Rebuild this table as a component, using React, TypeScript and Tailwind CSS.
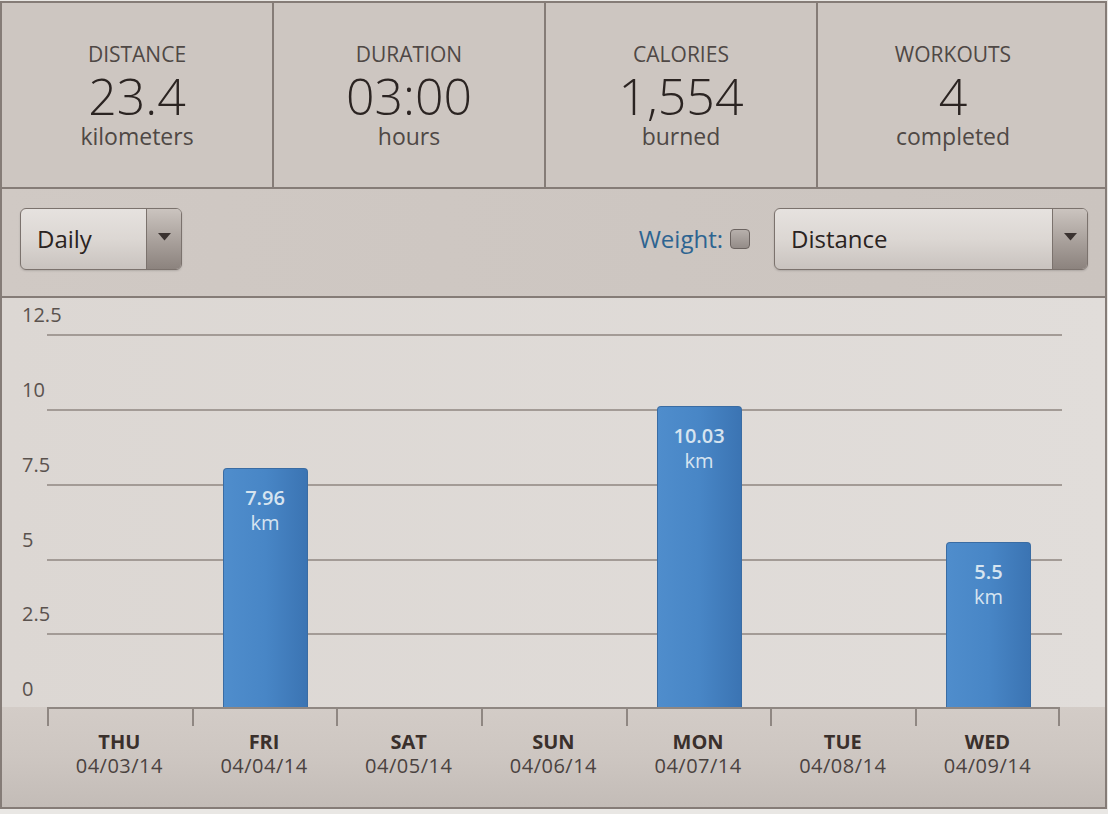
import React from "react";

const stats = [
  { label: "DISTANCE", value: "23.4", unit: "kilometers" },
  { label: "DURATION", value: "03:00", unit: "hours" },
  { label: "CALORIES", value: "1,554", unit: "burned" },
  { label: "WORKOUTS", value: "4", unit: "completed" },
];

const days = [
  { day: "THU", date: "04/03/14", km: 0 },
  { day: "FRI", date: "04/04/14", km: 7.96 },
  { day: "SAT", date: "04/05/14", km: 0 },
  { day: "SUN", date: "04/06/14", km: 0 },
  { day: "MON", date: "04/07/14", km: 10.03 },
  { day: "TUE", date: "04/08/14", km: 0 },
  { day: "WED", date: "04/09/14", km: 5.5 },
];

// 75px per 2.5 km
const PX_PER_KM = 30;

const Arrow = () => (
  <svg width="13" height="8" viewBox="0 0 13 8">
    <path d="M0 0 L13 0 L6.5 7.5 Z" fill="#3a3230" />
  </svg>
);

const Select = ({ label, width }: { label: string; width: string }) => (
  <div
    className={`${width} h-[62px] flex rounded-[6px] border border-[#7b726d] bg-linear-to-b from-[#e6e2df] via-[#dcd7d3] to-[#c9c3bf] shadow-[0_1px_2px_rgba(0,0,0,0.15)] overflow-hidden`}
  >
    <div className="flex-1 flex items-center pl-[16px] text-[24px] text-[#2a2321]">{label}</div>
    <div className="w-[35px] flex items-center justify-center pb-[4px] border-l border-[#7b726d] bg-linear-to-b from-[#cbc4bf] to-[#8c837e]">
      <Arrow />
    </div>
  </div>
);

const StatCell = ({ s }: { s: (typeof stats)[number] }) => (
  <div className="flex flex-col items-center pt-[39px]">
    <div className="text-[21px] leading-[24px] text-[#4f4845]">{s.label}</div>
    <div className="mt-[8px] text-[50px] leading-[44px] font-light text-[#2b2422]">{s.value}</div>
    <div className="mt-[4px] text-[23px] leading-[28px] text-[#4f4845]">{s.unit}</div>
  </div>
);

const GridRow = ({ label, h }: { label: string; h: string }) => (
  <div className={`${h} flex flex-col justify-end`}>
    <div className="pl-[20px] text-[20px] leading-[20px] text-[#5a524e]">{label}</div>
    <div className="mt-[9px] h-[2px] ml-[45px] mr-[43px] bg-[#a39b96]" />
  </div>
);

export default function App() {
  return (
    <div className="w-[1108px] h-[814px] bg-[#e9e7e4] pt-[1px] font-['Open_Sans',sans-serif]">
      <div className="w-[1107px] h-[808px] border-2 border-[#857c77] flex flex-col">
        {/* Stats */}
        <div className="h-[186px] flex border-b-2 border-[#857c77] bg-[#cdc6c1]">
          <div className="w-[272px] border-r-2 border-[#857c77]">
            <StatCell s={stats[0]} />
          </div>
          <div className="w-[272px] border-r-2 border-[#857c77]">
            <StatCell s={stats[1]} />
          </div>
          <div className="w-[272px] border-r-2 border-[#857c77]">
            <StatCell s={stats[2]} />
          </div>
          <div className="flex-1 pr-[17px]">
            <StatCell s={stats[3]} />
          </div>
        </div>

        {/* Controls */}
        <div className="h-[109px] flex items-start pt-[19px] pl-[18px] pr-[17px] border-b-2 border-[#857c77] bg-linear-to-r from-[#d0c9c4] to-[#cbc4bf]">
          <Select label="Daily" width="w-[162px]" />
          <div className="flex-1" />
          <div className="h-[62px] flex items-center">
            <span className="text-[24px] text-[#2d6491]">Weight:</span>
            <div className="ml-[7px] w-[20px] h-[20px] rounded-[4px] border border-[#6b6360] bg-linear-to-b from-[#b7b0ac] to-[#948c88]" />
          </div>
          <div className="ml-[24px]">
            <Select label="Distance" width="w-[314px]" />
          </div>
        </div>

        {/* Chart */}
        <div className="relative h-[409px] bg-linear-to-r from-[#dcd7d3] to-[#e1ddda]">
          <div className="flex flex-col">
            <GridRow label="12.5" h="h-[38px]" />
            <GridRow label="10" h="h-[75px]" />
            <GridRow label="7.5" h="h-[75px]" />
            <GridRow label="5" h="h-[75px]" />
            <GridRow label="2.5" h="h-[74px]" />
            <div className="h-[72px] flex flex-col justify-end pb-[8px] pl-[20px] text-[20px] leading-[20px] text-[#5a524e]">
              0
            </div>
          </div>
          <div className="absolute inset-0 flex items-end pl-[46px]">
            {days.map((d) => (
              <div key={d.day} className="w-[144.7px] flex justify-center">
                {d.km > 0 && (
                  <div
                    className="w-[85px] rounded-t-[4px] border border-b-0 border-[#3a6ca3] bg-linear-to-r from-[#4f8dcc] via-[#4886c6] to-[#3b74b3] flex flex-col items-center pt-[17px] text-[#d6e4f0]"
                    style={{ height: d.km * PX_PER_KM }}
                  >
                    <div className="text-[20px] leading-[24px] font-semibold">{d.km}</div>
                    <div className="text-[20px] leading-[26px]">km</div>
                  </div>
                )}
              </div>
            ))}
          </div>
        </div>

        {/* X axis */}
        <div className="flex-1 bg-linear-to-b from-[#d3ccc7] via-[#cdc6c1] to-[#c3bcb7]">
          <div className="flex pl-[45px]">
            {days.map((d, i) => (
              <div
                key={d.day}
                className={`w-[144.7px] h-[19px] border-t-2 border-l-2 border-[#8f8782] ${i === days.length - 1 ? "border-r-2" : ""}`}
              />
            ))}
          </div>
          <div className="flex pl-[45px] mt-[4px]">
            {days.map((d) => (
              <div key={d.day} className="w-[144.7px] flex flex-col items-center">
                <div className="text-[20px] leading-[24px] font-bold text-[#3a302c]">{d.day}</div>
                <div className="text-[20px] leading-[24px] text-[#4a423f] tracking-[0.5px]">{d.date}</div>
              </div>
            ))}
          </div>
        </div>
      </div>
    </div>
  );
}
